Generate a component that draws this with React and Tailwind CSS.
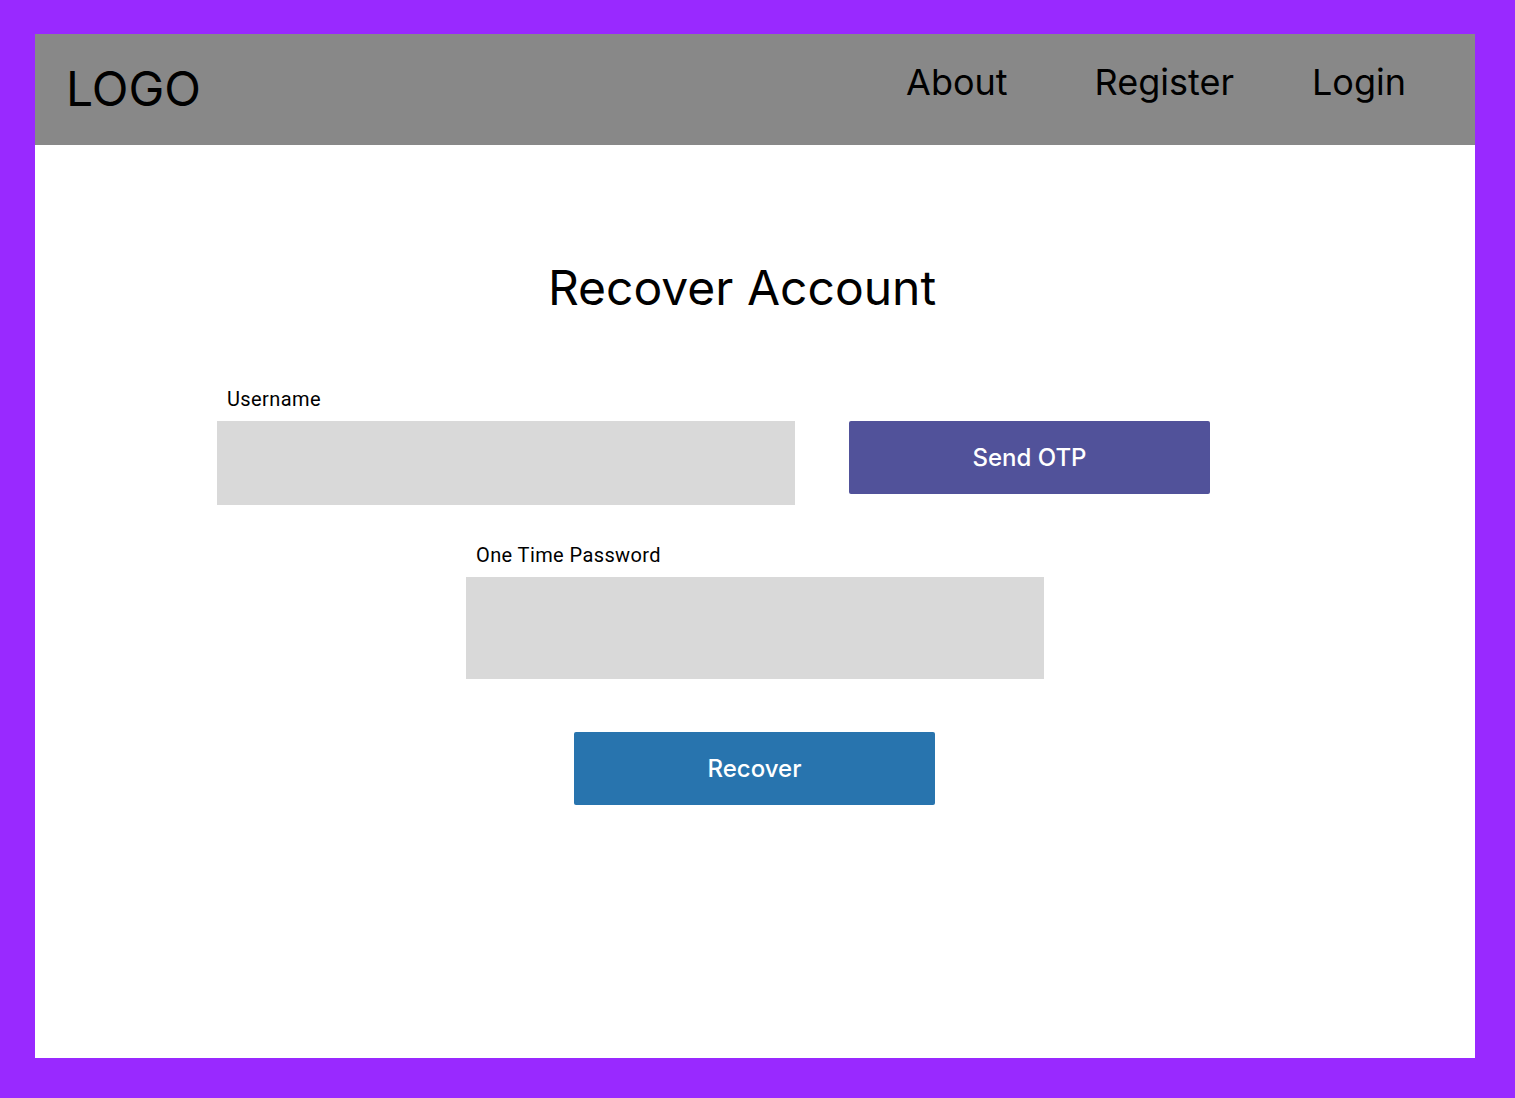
import React from 'react';

const App = () => {
    return (
        <div className="min-h-[1098px] w-[1515px] bg-[#9929ff] pt-[34px] pl-[35px]">
            <div className="w-[1440px] h-[1024px] bg-white flex flex-col">
                {/* Header */}
                <header className="h-[111px] bg-[#888888] flex items-center justify-between pl-[31px] pr-[69px] font-['Inter',sans-serif] text-black">
                    <div className="text-[48px] leading-none pb-[2px]">LOGO</div>
                    <nav className="flex items-center text-[36px] leading-none pb-[16px]">
                        <a className="mr-[87px]">About</a>
                        <a className="mr-[78px]">Register</a>
                        <a>Login</a>
                    </nav>
                </header>

                {/* Content */}
                <main className="flex flex-col">
                    <h1 className="mt-[119px] text-center pr-[26px] text-[48px] leading-none font-['Inter',sans-serif] text-black">
                        Recover Account
                    </h1>

                    <div className="mt-[75px] ml-[182px] flex items-start">
                        <div className="flex flex-col">
                            <label className="pl-[10px] mb-[10px] text-[20px] leading-[24px] tracking-[0.02em] font-['Roboto',sans-serif] text-black">Username</label>
                            <input className="w-[578px] h-[84px] bg-[#d9d9d9] outline-none px-3" />
                        </div>
                        <button className="ml-[54px] mt-[34px] w-[361px] h-[73px] rounded-[2px] bg-[#51529a] text-white text-[24px] font-medium font-['Inter',sans-serif]">
                            Send OTP
                        </button>
                    </div>

                    <div className="mt-[38px] ml-[431px] flex flex-col">
                        <label className="pl-[10px] mb-[10px] text-[20px] leading-[24px] tracking-[0.02em] font-['Roboto',sans-serif] text-black">One Time Password</label>
                        <input className="w-[578px] h-[102px] bg-[#d9d9d9] outline-none px-3" />
                    </div>

                    <div className="mt-[53px] ml-[539px]">
                        <button className="w-[361px] h-[73px] rounded-[2px] bg-[#2874ae] text-white text-[24px] font-medium font-['Inter',sans-serif]">
                            Recover
                        </button>
                    </div>
                </main>
            </div>
        </div>
    );
};

export default App;
